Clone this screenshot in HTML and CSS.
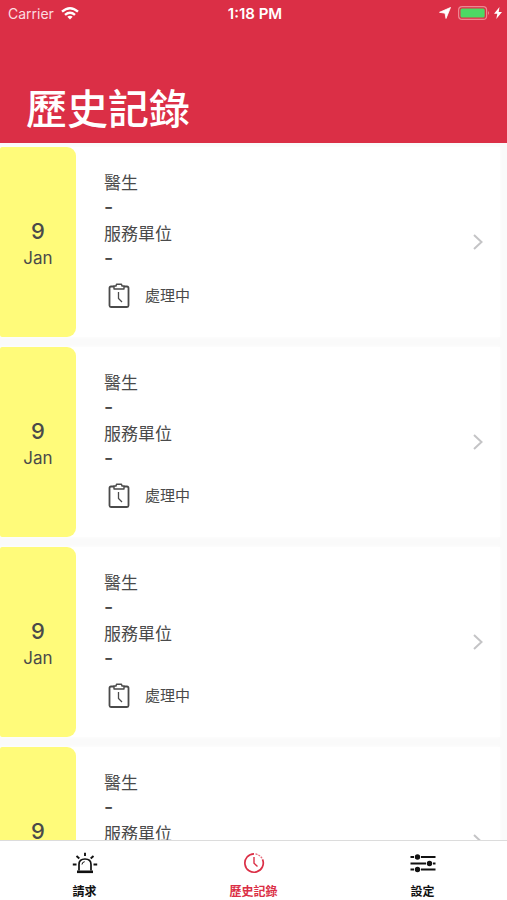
FILE: index.html
```html
<!DOCTYPE html>
<html lang="zh-Hant">
<head>
<meta charset="utf-8">
<meta name="viewport" content="width=device-width, initial-scale=1">
<title>歷史記錄</title>
<link rel="stylesheet" href="styles.css">
</head>
<body>
<svg class="sprite" aria-hidden="true">
  <symbol id="clipboard" viewBox="0 0 22 26">
    <path d="M6 3.500H3Q1.500 3.500 1.500 5V22.500Q1.500 24 3 24H19Q20.500 24 20.500 22.500V5Q20.500 3.500 19 3.500H16" fill="none" stroke="currentColor" stroke-width="1.800"/>
    <path d="M6 6V3H8L8.500 1.200H13.500L14 3H16V6Z" fill="none" stroke="currentColor" stroke-width="1.400" stroke-linejoin="round"/>
    <path d="M10.500 9V15.500L14 19" fill="none" stroke="currentColor" stroke-width="1.300"/>
  </symbol>
  <symbol id="chevron" viewBox="0 0 12 18">
    <path d="M2 2L9.500 9L2 16" fill="none" stroke="currentColor" stroke-width="2"/>
  </symbol>
</svg>

<header class="header">
  <div class="status">
    <div class="status-left">
      <span>Carrier</span>
      <svg width="18" height="13" viewBox="0 0 18 13" fill="none" stroke="#fff" stroke-width="2.400" aria-hidden="true">
        <path d="M1 4.700Q9-2.200 17 4.700"/>
        <path d="M4 7.900Q9 3.600 14 7.900"/>
        <path d="M6.300 9.800Q9 7.800 11.700 9.800L9 12.600Z" fill="#fff" stroke="none"/>
      </svg>
    </div>
    <time class="status-time">1:18 PM</time>
    <div class="status-right">
      <svg width="12" height="12" viewBox="0 0 12 12" aria-hidden="true"><path d="M11.500 .5L7 11.500L6 6.200L.5 5.300Z" fill="#fff" stroke="#fff" stroke-width=".8" stroke-linejoin="round"/></svg>
      <svg class="battery" width="32" height="14" viewBox="0 0 32 14" aria-hidden="true">
        <rect x=".6" y=".6" width="28" height="12.800" rx="3.500" fill="none" stroke="#ed8792" stroke-width="1.200"/>
        <rect x="2.500" y="2.500" width="24.200" height="9" rx="1.500" fill="#4cd964"/>
        <path d="M30 5Q32 7 30 9Z" fill="#ed8792"/>
      </svg>
      <svg width="8" height="12" viewBox="0 0 8 12" aria-hidden="true"><path d="M5.500 0L0 6.800H3.300L2.300 12L8 5H4.700Z" fill="#fff"/></svg>
    </div>
  </div>
  <h1 class="title">歷史記錄</h1>
</header>

<main class="list">
  <a class="card" href="#record-1">
    <span class="date"><span class="day">9</span><span class="month">Jan</span></span>
    <span class="details">
      <span class="line">醫生</span><span class="value">-</span>
      <span class="line">服務單位</span><span class="value">-</span>
      <span class="state"><svg width="22" height="26" aria-hidden="true"><use href="#clipboard"/></svg>處理中</span>
    </span>
    <svg class="chevron" width="12" height="18" aria-hidden="true"><use href="#chevron"/></svg>
  </a>
  <a class="card" href="#record-2">
    <span class="date"><span class="day">9</span><span class="month">Jan</span></span>
    <span class="details">
      <span class="line">醫生</span><span class="value">-</span>
      <span class="line">服務單位</span><span class="value">-</span>
      <span class="state"><svg width="22" height="26" aria-hidden="true"><use href="#clipboard"/></svg>處理中</span>
    </span>
    <svg class="chevron" width="12" height="18" aria-hidden="true"><use href="#chevron"/></svg>
  </a>
  <a class="card" href="#record-3">
    <span class="date"><span class="day">9</span><span class="month">Jan</span></span>
    <span class="details">
      <span class="line">醫生</span><span class="value">-</span>
      <span class="line">服務單位</span><span class="value">-</span>
      <span class="state"><svg width="22" height="26" aria-hidden="true"><use href="#clipboard"/></svg>處理中</span>
    </span>
    <svg class="chevron" width="12" height="18" aria-hidden="true"><use href="#chevron"/></svg>
  </a>
  <a class="card" href="#record-4">
    <span class="date"><span class="day">9</span><span class="month">Jan</span></span>
    <span class="details">
      <span class="line">醫生</span><span class="value">-</span>
      <span class="line">服務單位</span><span class="value">-</span>
      <span class="state"><svg width="22" height="26" aria-hidden="true"><use href="#clipboard"/></svg>處理中</span>
    </span>
    <svg class="chevron" width="12" height="18" aria-hidden="true"><use href="#chevron"/></svg>
  </a>
</main>

<nav class="tabs">
  <a class="tab" href="#request">
    <svg width="26" height="22" viewBox="0 0 26 22" fill="none" stroke="currentColor" aria-hidden="true">
      <path d="M7 18.500V12.500Q7 7 13 7Q19 7 19 12.500V18.500" stroke-width="1.700"/>
      <path d="M5 19.800H21" stroke-width="2.600"/>
      <path d="M10 12.500Q10 10 12.700 9.700" stroke-width="1"/>
      <path d="M13 .8V4M4.500 4L7.300 6.500M21.500 4L18.700 6.500M.8 12.500H4.500M21.500 12.500H25.200" stroke-width="1.900"/>
    </svg>
    <span>請求</span>
  </a>
  <a class="tab active" href="#history" aria-current="page">
    <svg width="26" height="22" viewBox="0 0 26 22" fill="none" stroke="currentColor" aria-hidden="true">
      <path d="M13 1.800A9.200 9.200 0 1 0 21.500 7.300" stroke-width="1.700"/>
      <path d="M14.500 1.900Q19 3 21.200 6.500" stroke-width="1.300" stroke-dasharray="2 1" opacity=".7"/>
      <path d="M13 5V11.200L16.500 14.500" stroke-width="1.400"/>
    </svg>
    <span>歷史記錄</span>
  </a>
  <a class="tab" href="#settings">
    <svg width="26" height="22" viewBox="0 0 26 22" stroke="currentColor" aria-hidden="true">
      <path d="M.5 5H4M11 5H25.500M.5 11.500H16M23 11.500H25.500M.5 17.500H4M11 17.500H25.500" stroke-width="1.800"/>
      <g fill="currentColor" stroke="none"><circle cx="7.500" cy="5" r="2.700"/><circle cx="19.500" cy="11.500" r="2.700"/><circle cx="7.500" cy="17.500" r="2.700"/></g>
    </svg>
    <span>設定</span>
  </a>
</nav>
</body>
</html>
```
FILE: styles.css
```css
* {
  box-sizing: border-box;
}

body {
  display: flex;
  flex-direction: column;
  height: 100vh;
  margin: 0;
  background: #fafafa;
  color: #4a4a4a;
  font-family: Inter, "Noto Sans CJK TC", sans-serif;
}

a {
  color: inherit;
  text-decoration: none;
}

svg {
  display: block;
  flex: none;
}

.sprite {
  position: absolute;
  width: 0;
  height: 0;
}

.header {
  flex: none;
  padding-bottom: 4px;
  background: #db2f46;
  color: #fff;
}

.status {
  display: grid;
  grid-template-columns: 1fr auto 1fr;
  align-items: center;
  height: 26px;
  padding: 0 5px 0 8px;
  font-size: 14px;
}

.status-left,
.status-right {
  display: flex;
  align-items: center;
  gap: 7px;
}

.status-left {
  color: #fbdde1;
}

.status-right {
  justify-content: flex-end;
}

.battery {
  margin-right: -3px;
}

.status-time {
  font-size: 15px;
  font-weight: 600;
}

.title {
  margin: 53px 0 0;
  padding-left: 26px;
  font-size: 41px;
  font-weight: 500;
  line-height: 60px;
}

.list {
  display: flex;
  flex: 1;
  flex-direction: column;
  gap: 10px;
  min-height: 0;
  padding: 4px 7px 0 0;
  overflow: hidden;
}

.card {
  display: flex;
  flex: none;
  align-items: center;
  min-height: 190px;
  padding-right: 16px;
  background: #fff;
  box-shadow: 0 0 4px #fff;
}

.date {
  display: flex;
  flex-direction: column;
  align-items: center;
  align-self: stretch;
  justify-content: center;
  width: 76px;
  padding-top: 4px;
  border-radius: 2px 9px 9px 2px;
  background: #fffb7a;
}

.day {
  font-size: 22px;
  font-weight: 500;
  line-height: 28px;
}

.month {
  font-size: 17px;
  line-height: 26px;
}

.details {
  display: flex;
  flex: 1;
  flex-direction: column;
  padding: 0 0 4px 28px;
}

.line {
  font-size: 17px;
  line-height: 26px;
}

.value {
  margin-bottom: 3px;
  font-size: 20px;
  font-weight: 500;
  line-height: 22px;
}

.state {
  display: flex;
  align-items: center;
  gap: 15px;
  margin-top: 10px;
  padding-left: 4px;
  font-size: 15px;
  line-height: 28px;
}

.chevron {
  color: #c4c4c6;
}

.tabs {
  display: grid;
  flex: none;
  grid-template-columns: repeat(3, 1fr);
  border-top: 1px solid #dcdcdc;
  background: #fff;
  color: #111;
}

.tab {
  display: flex;
  flex-direction: column;
  align-items: center;
  gap: 9px;
  padding: 11px 0 0;
  font-size: 12px;
  font-weight: 700;
  line-height: 17px;
}

.active {
  color: #db2f46;
}
```
